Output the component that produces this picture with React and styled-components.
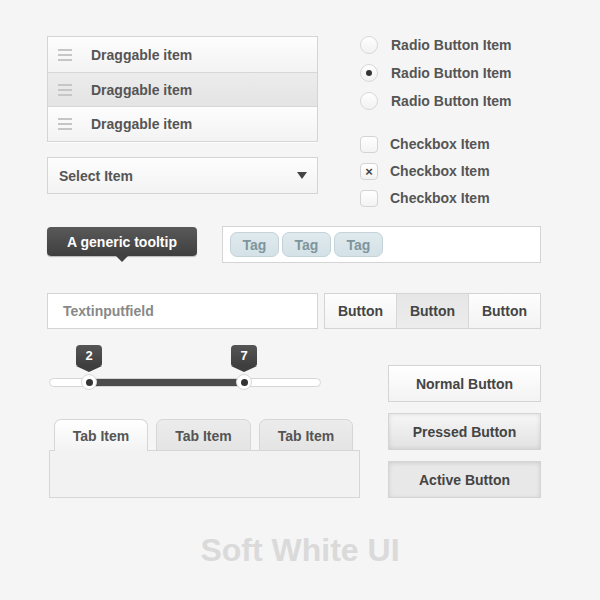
import React from "react";
import styled, { createGlobalStyle } from "styled-components";

const Global = createGlobalStyle`
  html, body { margin: 0; padding: 0; background: #f5f5f5; }
  body { font-family: "Liberation Sans", Arial, sans-serif; }
  * { box-sizing: border-box; }
`;

const Canvas = styled.div`
  width: 600px;
  height: 600px;
  background: #f5f5f5;
  padding-top: 36px;
  display: flex;
  flex-direction: column;
`;

const Page = styled.div`
  width: 494px;
  margin-left: 47px;
  display: flex;
  flex-direction: column;
`;

const Row = styled.div`
  display: flex;
  align-items: flex-start;
  margin-top: ${(p) => p.$top || 0}px;
`;

const Column = styled.div`
  display: flex;
  flex-direction: column;
  width: ${(p) => p.$w}px;
  margin-left: ${(p) => p.$ml || 0}px;
  margin-top: ${(p) => p.$mt || 0}px;
  gap: ${(p) => p.$gap || 0}px;
`;

const Label = styled.span`
  font-size: 14px;
  font-weight: bold;
  color: ${(p) => p.$color || "#555"};
  white-space: nowrap;
`;

/* Draggable list */
const List = styled.div`
  border: 1px solid #d4d4d4;
  display: flex;
  flex-direction: column;
  box-shadow: 0 1px 0 #fff;
`;

const DragRow = styled.div`
  height: ${(p) => p.$h}px;
  display: flex;
  align-items: center;
  padding-left: 10px;
  background: ${(p) =>
    p.$active
      ? "linear-gradient(#ececec, #e4e4e4)"
      : "linear-gradient(#fdfdfd, #f3f3f3)"};
  border-top: ${(p) => (p.$first ? "none" : "1px solid #d7d7d7")};
`;

const Handle = styled.div`
  width: 14px;
  display: flex;
  flex-direction: column;
  gap: 3px;
  margin-right: 19px;
  span {
    display: block;
    height: 2px;
    background: #c6c6c6;
  }
`;

const Select = styled.div`
  margin-top: 15px;
  height: 37px;
  border: 1px solid #d4d4d4;
  background: linear-gradient(#fdfdfd, #f3f3f3);
  display: flex;
  align-items: center;
  justify-content: space-between;
  padding: 0 10px 0 11px;
`;

const Caret = styled.span`
  width: 0;
  height: 0;
  border-left: 5px solid transparent;
  border-right: 5px solid transparent;
  border-top: 7px solid #444;
`;

/* Radio / checkbox */
const ChoiceRow = styled.div`
  height: 18px;
  display: flex;
  align-items: center;
  gap: ${(p) => p.$gap || 13}px;
`;

const Radio = styled.span`
  width: 18px;
  height: 18px;
  border-radius: 50%;
  border: 1px solid #d8d8d8;
  background: linear-gradient(#ffffff, #f1f1f1);
  display: flex;
  align-items: center;
  justify-content: center;
  &::after {
    content: "";
    width: 6px;
    height: 6px;
    border-radius: 50%;
    background: ${(p) => (p.$on ? "#333" : "transparent")};
  }
`;

const Check = styled.span`
  width: 18px;
  height: 17px;
  border-radius: 4px;
  border: 1px solid #d4d4d4;
  background: linear-gradient(#ffffff, #f3f3f3);
  display: flex;
  align-items: center;
  justify-content: center;
  font-size: 13px;
  line-height: 1;
  color: #444;
  font-weight: bold;
`;

/* Tooltip + tags */
const Tooltip = styled.div`
  position: relative;
  margin-top: 1px;
  width: 150px;
  height: 29px;
  border-radius: 4px;
  background: linear-gradient(#595959, #3f3f3f);
  box-shadow: 0 1px 1px rgba(0, 0, 0, 0.25);
  display: flex;
  align-items: center;
  justify-content: center;
  flex-shrink: 0;
  &::after {
    content: "";
    position: absolute;
    left: 50%;
    bottom: -6px;
    margin-left: -6px;
    border-left: 6px solid transparent;
    border-right: 6px solid transparent;
    border-top: 6px solid #404040;
  }
`;

const TagBox = styled.div`
  margin-left: 25px;
  flex: 1;
  height: 37px;
  border: 1px solid #d4d4d4;
  background: #fff;
  display: flex;
  align-items: center;
  gap: 3px;
  padding-left: 7px;
`;

const Tag = styled.span`
  width: 49px;
  height: 25px;
  border-radius: 7px;
  border: 1px solid #c3d3d9;
  background: linear-gradient(#dfeaee, #d4e1e6);
  display: flex;
  align-items: center;
  justify-content: center;
`;

/* Input + button group */
const TextInput = styled.div`
  width: 271px;
  height: 36px;
  border: 1px solid #d4d4d4;
  background: #fff;
  display: flex;
  align-items: center;
  padding-left: 15px;
  flex-shrink: 0;
`;

const Group = styled.div`
  margin-left: 6px;
  flex: 1;
  height: 36px;
  border: 1px solid #d4d4d4;
  display: flex;
`;

const GroupButton = styled.div`
  flex: 1;
  display: flex;
  align-items: center;
  justify-content: center;
  background: ${(p) =>
    p.$on ? "linear-gradient(#e6e6e6, #ececec)" : "linear-gradient(#fdfdfd, #f3f3f3)"};
  border-left: ${(p) => (p.$first ? "none" : "1px solid #d7d7d7")};
`;

/* Slider */
const Slider = styled.div`
  position: relative;
  margin-left: 2px;
  width: 272px;
  height: 45px;
`;

const Track = styled.div`
  position: absolute;
  left: 0;
  right: 0;
  top: 33px;
  height: 9px;
  border-radius: 5px;
  border: 1px solid #d6d6d6;
  background: #fff;
`;

const Range = styled.div`
  position: absolute;
  top: 34px;
  height: 7px;
  background: #4b4b4b;
`;

const Knob = styled.div`
  position: absolute;
  top: 29px;
  width: 16px;
  height: 16px;
  margin-left: -8px;
  border-radius: 50%;
  background: #fff;
  border: 1px solid #d8d8d8;
  display: flex;
  align-items: center;
  justify-content: center;
  &::after {
    content: "";
    width: 7px;
    height: 7px;
    border-radius: 50%;
    background: #333;
  }
`;

const Pin = styled.div`
  position: absolute;
  top: 0;
  width: 26px;
  height: 21px;
  margin-left: -13px;
  border-radius: 4px 4px 2px 2px;
  background: linear-gradient(#555, #3e3e3e);
  display: flex;
  align-items: center;
  justify-content: center;
  color: #fff;
  font-size: 13px;
  font-weight: bold;
  &::after {
    content: "";
    position: absolute;
    bottom: -6px;
    left: 50%;
    margin-left: -13px;
    border-left: 13px solid transparent;
    border-right: 13px solid transparent;
    border-top: 6px solid #3e3e3e;
  }
`;

/* Tabs */
const Tabs = styled.div`
  margin-top: 29px;
  display: flex;
  flex-direction: column;
`;

const TabBar = styled.div`
  display: flex;
  padding-left: 7px;
  gap: 8px;
  position: relative;
  z-index: 1;
`;

const Tab = styled.div`
  width: ${(p) => p.$w}px;
  height: 32px;
  border: 1px solid #d6d6d6;
  border-bottom: ${(p) => (p.$on ? "none" : "1px solid #d6d6d6")};
  border-radius: 7px 7px 0 0;
  background: ${(p) =>
    p.$on ? "linear-gradient(#ffffff, #f3f3f3)" : "linear-gradient(#ececec, #e4e4e4)"};
  display: flex;
  align-items: center;
  justify-content: center;
  padding-top: 1px;
`;

const Panel = styled.div`
  margin-top: -1px;
  width: 311px;
  margin-left: 2px;
  height: 48px;
  border: 1px solid #d6d6d6;
  background: #f2f2f2;
`;

/* Right buttons */
const Button = styled.div`
  height: 37px;
  border: 1px solid #d4d4d4;
  display: flex;
  align-items: center;
  justify-content: center;
  background: ${(p) =>
    p.$kind === "pressed"
      ? "linear-gradient(#f6f6f6, #e2e2e2)"
      : p.$kind === "active"
      ? "#e8e8e8"
      : "linear-gradient(#ffffff, #f3f3f3)"};
  box-shadow: ${(p) =>
    p.$kind === "pressed"
      ? "inset 0 0 4px rgba(0,0,0,0.12)"
      : p.$kind === "active"
      ? "inset 0 1px 4px rgba(0,0,0,0.12)"
      : "none"};
`;

const Title = styled.div`
  margin-top: 32px;
  text-align: center;
  font-size: 32px;
  line-height: 40px;
  font-weight: bold;
  color: #dadada;
`;

const pins = [
  { value: 2, pos: 40 },
  { value: 7, pos: 195 },
];

const dragRows = [
  { h: 35, active: false },
  { h: 34, active: true },
  { h: 35, active: false },
];

export default function App() {
  return (
    <>
      <Global />
      <Canvas>
        <Page>
          <Row>
            <Column $w={271}>
              <List>
                {dragRows.map((r, i) => (
                  <DragRow key={i} $h={r.h} $active={r.active} $first={i === 0}>
                    <Handle>
                      <span />
                      <span />
                      <span />
                    </Handle>
                    <Label>Draggable item</Label>
                  </DragRow>
                ))}
              </List>
              <Select>
                <Label>Select Item</Label>
                <Caret />
              </Select>
            </Column>
            <Column $w={180} $ml={42}>
              <Column $gap={10}>
                {[false, true, false].map((on, i) => (
                  <ChoiceRow key={i}>
                    <Radio $on={on} />
                    <Label>Radio Button Item</Label>
                  </ChoiceRow>
                ))}
              </Column>
              <Column $gap={9} $mt={25}>
                {[false, true, false].map((on, i) => (
                  <ChoiceRow key={i} $gap={12}>
                    <Check>{on ? "×" : ""}</Check>
                    <Label>Checkbox Item</Label>
                  </ChoiceRow>
                ))}
              </Column>
            </Column>
          </Row>

          <Row $top={19}>
            <Tooltip>
              <Label $color="#fff">A generic tooltip</Label>
            </Tooltip>
            <TagBox>
              <Tag><Label $color="#7f959d">Tag</Label></Tag>
              <Tag><Label $color="#7f959d">Tag</Label></Tag>
              <Tag><Label $color="#7f959d">Tag</Label></Tag>
            </TagBox>
          </Row>

          <Row $top={30}>
            <TextInput>
              <Label $color="#888">Textinputfield</Label>
            </TextInput>
            <Group>
              <GroupButton $first><Label $color="#444">Button</Label></GroupButton>
              <GroupButton $on><Label $color="#444">Button</Label></GroupButton>
              <GroupButton><Label $color="#444">Button</Label></GroupButton>
            </Group>
          </Row>

          <Row $top={16}>
            <Column $w={313}>
              <Slider>
                <Track />
                <Range style={{ left: pins[0].pos, width: pins[1].pos - pins[0].pos }} />
                {pins.map((p) => (
                  <React.Fragment key={p.value}>
                    <Pin style={{ left: p.pos }}>{p.value}</Pin>
                    <Knob style={{ left: p.pos }} />
                  </React.Fragment>
                ))}
              </Slider>
              <Tabs>
                <TabBar>
                  <Tab $on $w={94}><Label>Tab Item</Label></Tab>
                  <Tab $w={95}><Label>Tab Item</Label></Tab>
                  <Tab $w={94}><Label>Tab Item</Label></Tab>
                </TabBar>
                <Panel />
              </Tabs>
            </Column>
            <Column $w={154} $ml={28} $mt={20} $gap={11}>
              <Button><Label $color="#444">Normal Button</Label></Button>
              <Button $kind="pressed"><Label $color="#444">Pressed Button</Label></Button>
              <Button $kind="active"><Label $color="#444">Active Button</Label></Button>
            </Column>
          </Row>
        </Page>
        <Title>Soft White UI</Title>
      </Canvas>
    </>
  );
}
